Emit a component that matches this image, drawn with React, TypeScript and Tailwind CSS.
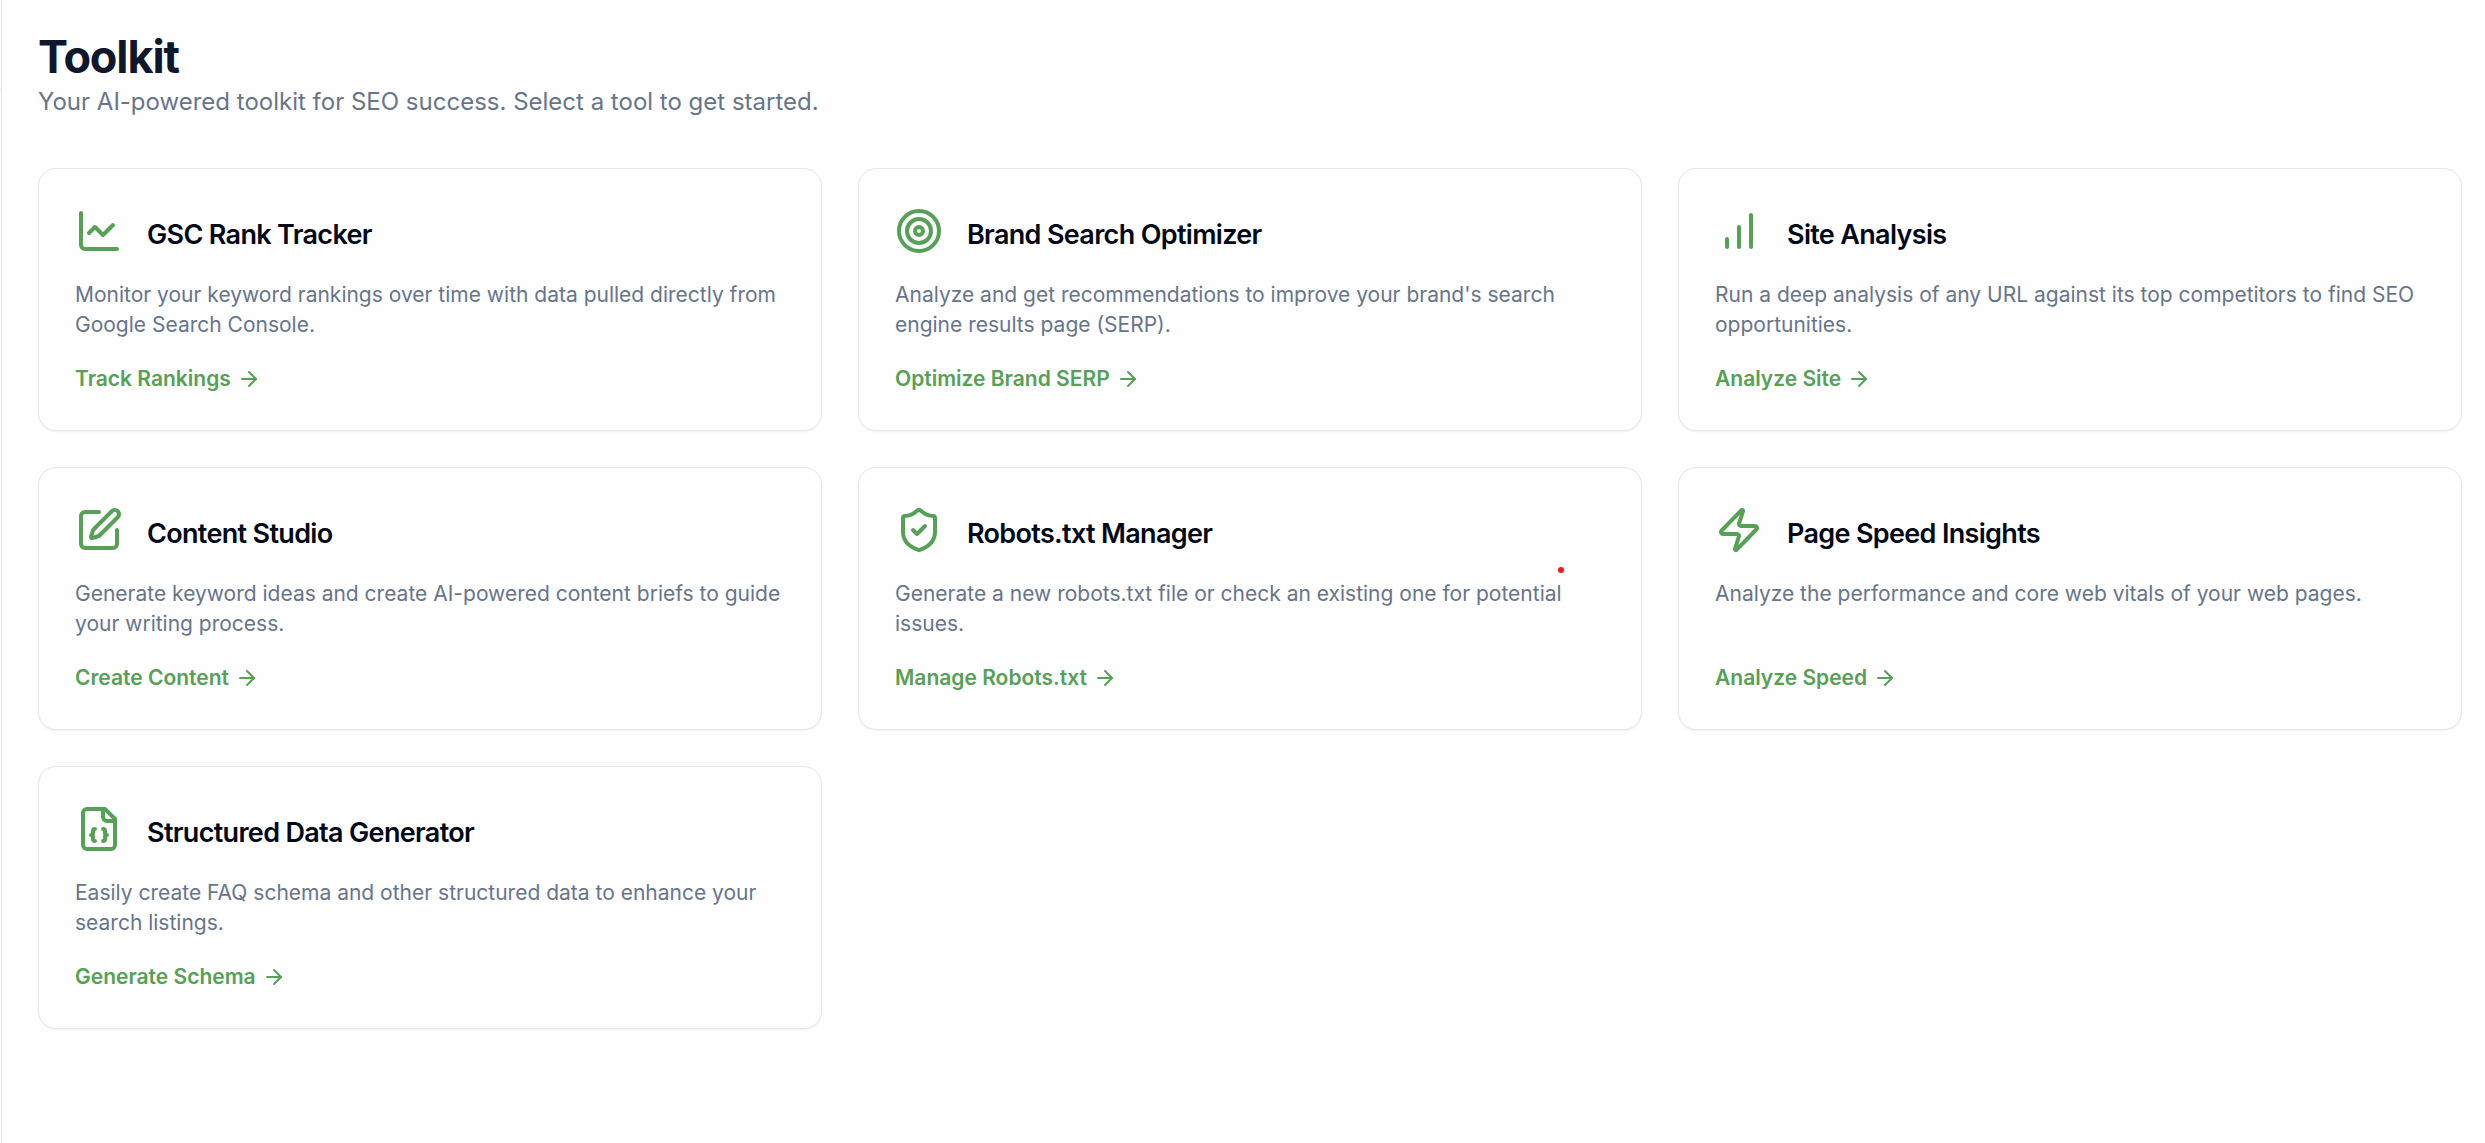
import React from 'react';
import { ArrowRight, ChartLine, ShieldCheck, SquarePen, Target, Zap } from 'lucide-react';

interface Tool {
  title: string;
  description: string;
  linkText: string;
  href: string;
  icon: React.ElementType;
  hasMarker?: boolean;
}

// Three rising bars, no axis
function BarsIcon({ className }: { className?: string }) {
  return (
    <svg
      className={className}
      viewBox="0 0 24 24"
      fill="none"
      stroke="currentColor"
      strokeWidth="2"
      strokeLinecap="round"
      strokeLinejoin="round"
      aria-hidden="true"
    >
      <path d="M12 20V10" />
      <path d="M18 20V4" />
      <path d="M6 20v-4" />
    </svg>
  );
}

// File with a folded corner and braces
function FileJsonIcon({ className }: { className?: string }) {
  return (
    <svg
      className={className}
      viewBox="0 0 24 24"
      fill="none"
      stroke="currentColor"
      strokeWidth="2"
      strokeLinecap="round"
      strokeLinejoin="round"
      aria-hidden="true"
    >
      <path d="M15 2H6a2 2 0 0 0-2 2v16a2 2 0 0 0 2 2h12a2 2 0 0 0 2-2V7Z" />
      <path d="M14 2v4a2 2 0 0 0 2 2h4" />
      <path d="M10 12a1 1 0 0 0-1 1v1a1 1 0 0 1-1 1 1 1 0 0 1 1 1v1a1 1 0 0 0 1 1" />
      <path d="M14 18a1 1 0 0 0 1-1v-1a1 1 0 0 1 1-1 1 1 0 0 1-1-1v-1a1 1 0 0 0-1-1" />
    </svg>
  );
}

const tools: Tool[] = [
  {
    title: 'GSC Rank Tracker',
    description: 'Monitor your keyword rankings over time with data pulled directly from Google Search Console.',
    linkText: 'Track Rankings',
    href: '#rank-tracker',
    icon: ChartLine,
  },
  {
    title: 'Brand Search Optimizer',
    description: "Analyze and get recommendations to improve your brand's search engine results page (SERP).",
    linkText: 'Optimize Brand SERP',
    href: '#brand-search',
    icon: Target,
  },
  {
    title: 'Site Analysis',
    description: 'Run a deep analysis of any URL against its top competitors to find SEO opportunities.',
    linkText: 'Analyze Site',
    href: '#site-analysis',
    icon: BarsIcon,
  },
  {
    title: 'Content Studio',
    description: 'Generate keyword ideas and create AI-powered content briefs to guide your writing process.',
    linkText: 'Create Content',
    href: '#content-studio',
    icon: SquarePen,
  },
  {
    title: 'Robots.txt Manager',
    description: 'Generate a new robots.txt file or check an existing one for potential issues.',
    linkText: 'Manage Robots.txt',
    href: '#robots',
    icon: ShieldCheck,
    hasMarker: true,
  },
  {
    title: 'Page Speed Insights',
    description: 'Analyze the performance and core web vitals of your web pages.',
    linkText: 'Analyze Speed',
    href: '#page-speed',
    icon: Zap,
  },
  {
    title: 'Structured Data Generator',
    description: 'Easily create FAQ schema and other structured data to enhance your search listings.',
    linkText: 'Generate Schema',
    href: '#structured-data',
    icon: FileJsonIcon,
  },
];

function ToolCard({ tool }: { tool: Tool }) {
  const Icon = tool.icon;

  return (
    <div className="relative flex flex-col rounded-[18px] border border-[#e5e7eb] bg-[#fefefe] p-9 shadow-xs">
      <div className="flex h-[51px] items-center gap-6">
        <Icon className="h-12 w-12 shrink-0 text-[#56a155]" />
        <h2 className="pt-2 text-[27px] leading-9 font-semibold tracking-tight text-[#020817]">
          {tool.title}
        </h2>
      </div>
      <p className="mt-6 flex-1 text-[21px] leading-[30px] text-[#67758a]">{tool.description}</p>
      <a
        href={tool.href}
        className="mt-6 flex items-center gap-1.5 self-start text-[21px] leading-[30px] font-semibold text-[#56a155]"
      >
        {tool.linkText}
        <ArrowRight className="h-6 w-6" />
      </a>
      {tool.hasMarker && (
        <span className="absolute top-[99px] right-[77px] h-1.5 w-1.5 rounded-full bg-[#f5151c]" />
      )}
    </div>
  );
}

function App() {
  return (
    <div className="flex min-h-screen bg-[#fefefe] font-['Inter',sans-serif]">
      {/* Edge of the sidebar, with its header divider */}
      <div className="w-0.5 shrink-0 border-r border-[#e2e5ea]">
        <div className="h-[90px] border-b border-[#e2e5ea]" />
      </div>

      <main className="flex-1 pt-[30px] pr-[23px] pb-9 pl-9">
        <h1 className="text-[45px] leading-[54px] font-bold tracking-tight text-[#0f172a]">Toolkit</h1>
        <p className="text-2xl leading-9 text-[#67758a]">
          Your AI-powered toolkit for SEO success. Select a tool to get started.
        </p>

        <div className="mt-12 grid grid-cols-1 gap-9 md:grid-cols-2 lg:grid-cols-3">
          {tools.map((tool) => (
            <ToolCard key={tool.title} tool={tool} />
          ))}
        </div>
      </main>
    </div>
  );
}

export default App;
